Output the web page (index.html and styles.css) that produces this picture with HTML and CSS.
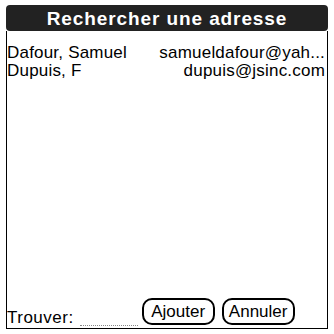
FILE: index.html
```html
<!DOCTYPE html>
<html lang="fr">
<head>
<meta charset="utf-8">
<title>Rechercher une adresse</title>
<link rel="stylesheet" href="styles.css">
</head>
<body>
<div class="screen">
  <div class="title">Rechercher une adresse</div>
  <div class="content">
    <div class="list">
      <div class="row"><span class="name">Dafour, Samuel</span><span class="email">samueldafour@yah...</span></div>
      <div class="row"><span class="name">Dupuis, F</span><span class="email">dupuis@jsinc.com</span></div>
    </div>
    <div class="footer">
      <span class="label">Trouver:</span>
      <span class="field"></span>
      <button class="btn">Ajouter</button>
      <button class="btn">Annuler</button>
    </div>
  </div>
</div>
</body>
</html>
```

FILE: styles.css
```css
html, body {
  margin: 0;
  padding: 0;
  background: #fff;
}
body {
  font-family: "Liberation Sans", Arial, sans-serif;
  color: #000;
}
.screen {
  margin: 5px 0 0 6px;
  width: 322px;
  height: 324px;
  display: flex;
  flex-direction: column;
}
.title {
  height: 26px;
  line-height: 26px;
  background: #222;
  color: #fff;
  border-radius: 4px;
  font-weight: bold;
  font-size: 19px;
  letter-spacing: 0.9px;
  text-align: center;
  padding-top: 1px;
  box-sizing: border-box;
}
.content {
  flex: 1;
  display: flex;
  flex-direction: column;
  border: 1px solid #000;
  border-top: none;
}
.list {
  flex: 1;
  padding: 13px 2px 0 0;
}
.row {
  display: flex;
  justify-content: space-between;
  font-size: 17px;
  line-height: 18px;
  letter-spacing: 0.2px;
  white-space: nowrap;
}
.footer {
  display: flex;
  align-items: flex-end;
}
.label {
  font-size: 17px;
  line-height: 20px;
  letter-spacing: 0.5px;
}
.field {
  width: 58px;
  height: 0;
  margin: 0 4px 2px 6px;
  border-bottom: 1px dotted #888;
}
.btn {
  box-sizing: border-box;
  width: 73px;
  height: 27px;
  margin: 0 0 3px 0;
  padding: 0;
  border: 2px solid #000;
  border-radius: 10px;
  background: #fff;
  color: #000;
  font-family: "Liberation Sans", Arial, sans-serif;
  font-size: 17px;
  line-height: 21px;
  letter-spacing: 0;
  text-align: center;
}
.btn + .btn {
  margin-left: 7px;
}
```
